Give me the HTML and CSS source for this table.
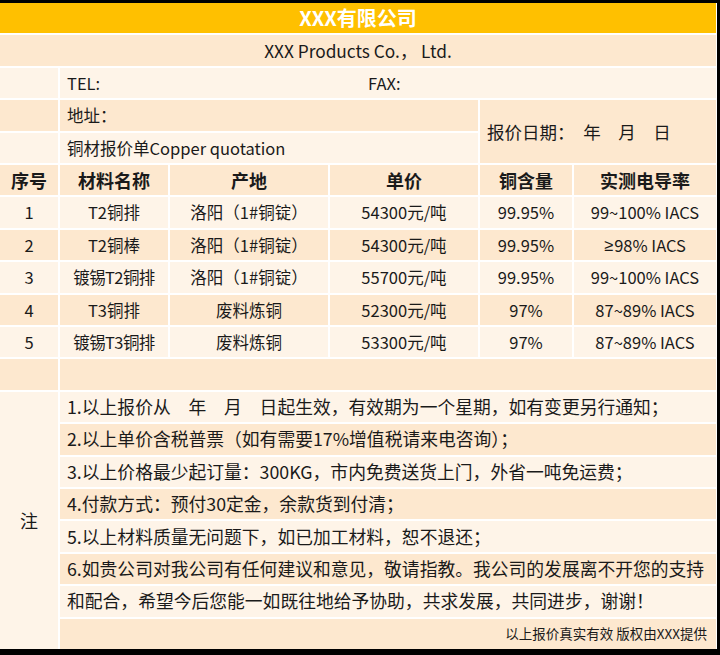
FILE: index.html
```html
<!DOCTYPE html>
<html lang="zh-CN">
<head>
<meta charset="utf-8">
<title>XXX有限公司 铜材报价单</title>
<link rel="stylesheet" href="styles.css">
</head>
<body>
<div class="sheet">
  <div class="c title span-all ctr">XXX有限公司</div>
  <div class="c pe span-all ctr sub">XXX Products Co.，&nbsp;Ltd.</div>

  <div class="c li"></div>
  <div class="c li span-rest left"><span class="tel">TEL:</span><span>FAX:</span></div>

  <div class="c pe"></div>
  <div class="c pe span-3 left">地址：</div>
  <div class="c pe span-2 tall left date">报价日期：　年　月　日</div>

  <div class="c li"></div>
  <div class="c li span-3 left">铜材报价单Copper quotation</div>

  <div class="c pe ctr hd">序号</div>
  <div class="c pe ctr hd">材料名称</div>
  <div class="c pe ctr hd">产地</div>
  <div class="c pe ctr hd">单价</div>
  <div class="c pe ctr hd">铜含量</div>
  <div class="c pe ctr hd">实测电导率</div>

  <div class="c li ctr">1</div>
  <div class="c li ctr">T2铜排</div>
  <div class="c li ctr">洛阳（1#铜锭）</div>
  <div class="c li ctr">54300元/吨</div>
  <div class="c li ctr">99.95%</div>
  <div class="c li ctr">99~100% IACS</div>

  <div class="c pe ctr">2</div>
  <div class="c pe ctr">T2铜棒</div>
  <div class="c pe ctr">洛阳（1#铜锭）</div>
  <div class="c pe ctr">54300元/吨</div>
  <div class="c pe ctr">99.95%</div>
  <div class="c pe ctr"><span class="ge">≥</span>98% IACS</div>

  <div class="c li ctr">3</div>
  <div class="c li ctr tight">镀锡T2铜排</div>
  <div class="c li ctr">洛阳（1#铜锭）</div>
  <div class="c li ctr">55700元/吨</div>
  <div class="c li ctr">99.95%</div>
  <div class="c li ctr">99~100% IACS</div>

  <div class="c pe ctr">4</div>
  <div class="c pe ctr">T3铜排</div>
  <div class="c pe ctr">废料炼铜</div>
  <div class="c pe ctr">52300元/吨</div>
  <div class="c pe ctr">97%</div>
  <div class="c pe ctr">87~89% IACS</div>

  <div class="c li ctr">5</div>
  <div class="c li ctr tight">镀锡T3铜排</div>
  <div class="c li ctr">废料炼铜</div>
  <div class="c li ctr">53300元/吨</div>
  <div class="c li ctr">97%</div>
  <div class="c li ctr">87~89% IACS</div>

  <div class="c pe"></div>
  <div class="c pe span-rest"></div>

  <div class="c li ctr note-head">注</div>
  <div class="c li span-rest left note">1.以上报价从　年　月　日起生效，有效期为一个星期，如有变更另行通知；</div>
  <div class="c pe span-rest left note">2.以上单价含税普票（如有需要17%增值税请来电咨询）；</div>
  <div class="c li span-rest left note">3.以上价格最少起订量：300KG，市内免费送货上门，外省一吨免运费；</div>
  <div class="c pe span-rest left note">4.付款方式：预付30定金，余款货到付清；</div>
  <div class="c li span-rest left note">5.以上材料质量无问题下，如已加工材料，恕不退还；</div>
  <div class="c pe span-rest left note">6.如贵公司对我公司有任何建议和意见，敬请指教。我公司的发展离不开您的支持</div>
  <div class="c li span-rest left note">和配合，希望今后您能一如既往地给予协助，共求发展，共同进步，谢谢！</div>
  <div class="c pe span-rest right foot">以上报价真实有效 版权由XXX提供</div>
</div>
</body>
</html>
```

FILE: styles.css
```css
html, body {
  margin: 0;
  padding: 0;
  background: #000;
}

body {
  width: 720px;
  height: 655px;
  overflow: hidden;
  font-family: "Noto Sans CJK SC", "Noto Sans", sans-serif;
  color: #1a1a1a;
}

.sheet {
  margin-top: 3px;
  width: 717px;
  height: 646px;
  background: #fff;
  display: grid;
  grid-template-columns: 58px 108px 158px 148px 92px 1fr;
  grid-template-rows: repeat(20, 1fr);
  column-gap: 2px;
  row-gap: 2px;
  padding-right: 1px;
  box-sizing: border-box;
}

.c {
  display: flex;
  align-items: center;
  font-size: 16.5px;
  line-height: 1;
  white-space: nowrap;
  overflow: hidden;
  min-width: 0;
}

.pe { background: #fde8cf; }
.li { background: #fef4e8; }

.title {
  background: #ffc000;
  color: #fff;
  font-weight: bold;
  font-size: 20px;
}

.sub { font-size: 17.3px; }

.span-all { grid-column: 1 / -1; }
.span-rest { grid-column: 2 / -1; }
.span-3 { grid-column: span 3; }
.span-2 { grid-column: span 2; }
.tall { grid-row: span 2; }

.ctr { justify-content: center; }
.left { justify-content: flex-start; padding-left: 7px; }
.right { justify-content: flex-end; padding-right: 9px; }

.tel { width: 301px; }

.date { font-size: 17.5px; padding-left: 7px; }

.hd { font-weight: bold; font-size: 18px; }

.tight { letter-spacing: -0.6px; }

.ge { font-family: "Liberation Sans", sans-serif; margin-right: 1px; }

.note { font-size: 17.8px; }
.note-head { grid-row: span 8; font-size: 18px; }

.foot { font-size: 13.5px; }
```
